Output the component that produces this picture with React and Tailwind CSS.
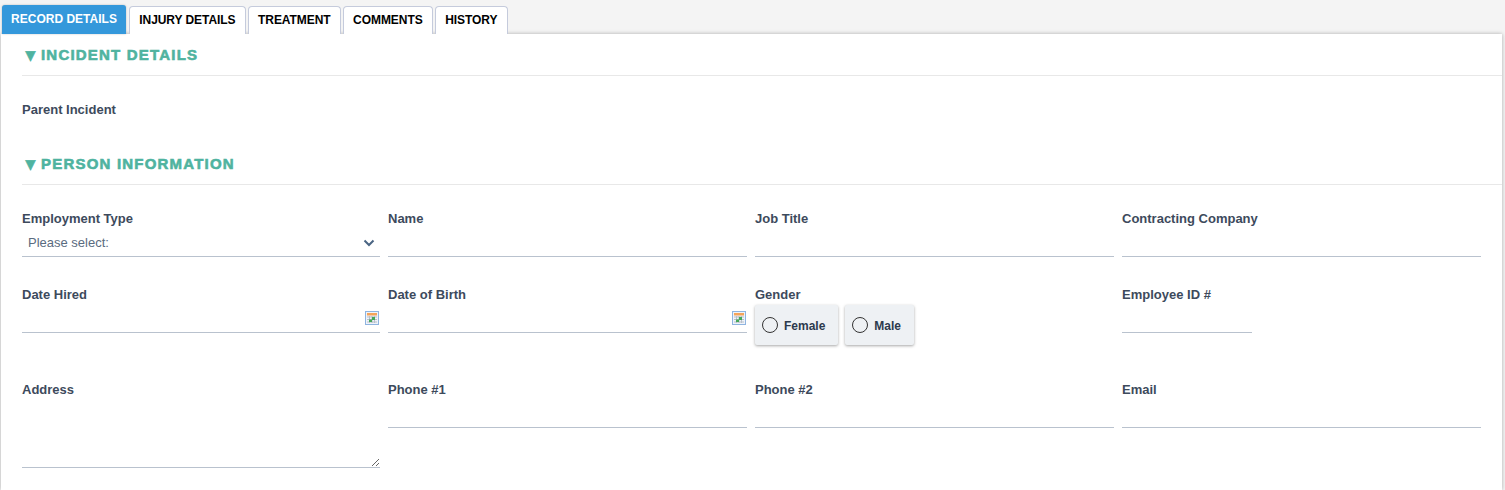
const tabs = ["INJURY DETAILS", "TREATMENT", "COMMENTS", "HISTORY"];

const CalendarIcon = () => (
    <svg width="14" height="14" viewBox="0 0 14 14" className="absolute right-[1px] top-[2px]">
        <rect x="0.5" y="0.5" width="13" height="13" fill="#eef3fa" stroke="#8fb4e0" />
        <rect x="2" y="2" width="10" height="2.5" fill="#f5a45a" />
        <path d="M2 6h10M2 8.5h10M2 11h10M4.5 5v7M7 5v7M9.5 5v7" stroke="#b9bfc8" strokeWidth="1" />
        <rect x="7" y="6" width="3" height="3" fill="#45a85a" />
        <rect x="4" y="8.5" width="3" height="2.5" fill="#45a85a" />
    </svg>
);

const Label = ({ children }) => (
    <label className="block text-[13px] leading-[15px] font-bold text-[#3d4a5c]">{children}</label>
);

const TextField = ({ label, date, className = "" }) => (
    <div className={className}>
        <Label>{label}</Label>
        <div className="relative mt-[7px] h-[24px] border-b border-[#b9c2ce]">
            <input className="w-full h-full outline-none bg-transparent" />
            {date && <CalendarIcon />}
        </div>
    </div>
);

const Radio = ({ label }) => (
    <div className="flex items-center gap-[6px] h-[40px] pl-[7px] pr-[13px] bg-[#eef1f4] rounded-[2px] shadow-[0_1px_3px_rgba(0,0,0,0.35)]">
        <span className="w-[16px] h-[16px] rounded-full border border-[#333] bg-transparent"></span>
        <span className="pt-[1px] text-[12px] font-bold text-[#2c3a4d]">{label}</span>
    </div>
);

const SectionTitle = ({ children }) => (
    <div className="h-[42px] pt-[2px] border-b border-[#e8e8e8] flex items-center text-[15px] font-bold tracking-[1.2px] text-[#4fb3a0] [-webkit-text-stroke:0.6px_#4fb3a0]">
        <span className="w-[19px] text-[17px] tracking-normal">▼</span>
        {children}
    </div>
);

export default function App() {
    return (
        <div className="h-[490px] overflow-hidden bg-[#f4f4f4] font-['Liberation_Sans',Arial,sans-serif]">
            {/* Tabs */}
            <div className="flex items-end h-[34px] pl-[2px] gap-[2px]">
                <div className="h-[29px] w-[124px] mr-[1px] pb-[1px] flex items-center justify-center bg-[#3498db] text-white text-[12px] font-bold rounded-t-[3px] shadow-[0_0_2px_rgba(0,0,0,0.25)]">
                    RECORD DETAILS
                </div>
                {tabs.map((tab) => (
                    <div
                        key={tab}
                        className="h-[28px] px-[9.25px] pb-[1px] flex items-center justify-center bg-white text-black text-[12px] tracking-[-0.06px] font-bold border border-b-0 border-[#c5cbdc] rounded-t-[4px]"
                    >
                        {tab}
                    </div>
                ))}
            </div>

            {/* Panel */}
            <div className="ml-[1px] w-[1501px] h-[456px] bg-white pl-[21px] shadow-[0_0_4px_rgba(0,0,0,0.3)]">
                <SectionTitle>INCIDENT DETAILS</SectionTitle>
                <div className="h-[67px] pt-[26px]">
                    <Label>Parent Incident</Label>
                </div>
                <SectionTitle>PERSON INFORMATION</SectionTitle>

                <div className="grid grid-cols-[358px_359px_359px_359px] gap-x-[8px] w-[1459px] pt-[26px]">
                    {/* Row 1 */}
                    <div className="h-[76px]">
                        <Label>Employment Type</Label>
                        <div className="relative mt-[7px] h-[24px] border-b border-[#b9c2ce]">
                            <select className="block w-full h-[20px] leading-[16px] appearance-none outline-none bg-transparent pl-[6px] text-[13px] text-[#5a6b80]">
                                <option>Please select:</option>
                            </select>
                            <svg width="12" height="8" viewBox="0 0 12 8" className="absolute right-[5px] top-[6px] pointer-events-none">
                                <path d="M1.5 1.5L6 6l4.5-4.5" fill="none" stroke="#4a6583" strokeWidth="2" />
                            </svg>
                        </div>
                    </div>
                    <TextField label="Name" />
                    <TextField label="Job Title" />
                    <TextField label="Contracting Company" />

                    {/* Row 2 */}
                    <div className="h-[95px]">
                        <TextField label="Date Hired" date />
                    </div>
                    <TextField label="Date of Birth" date />
                    <div>
                        <Label>Gender</Label>
                        <div className="flex gap-[7px] mt-[3px]">
                            <Radio label="Female" />
                            <Radio label="Male" />
                        </div>
                    </div>
                    <TextField label="Employee ID #" className="w-[130px]" />

                    {/* Row 3 */}
                    <div>
                        <Label>Address</Label>
                        <textarea className="block w-full h-[64px] mt-[7px] border-b border-[#b9c2ce] outline-none bg-transparent resize-y"></textarea>
                    </div>
                    <TextField label="Phone #1" />
                    <TextField label="Phone #2" />
                    <TextField label="Email" />
                </div>
            </div>
        </div>
    );
}
